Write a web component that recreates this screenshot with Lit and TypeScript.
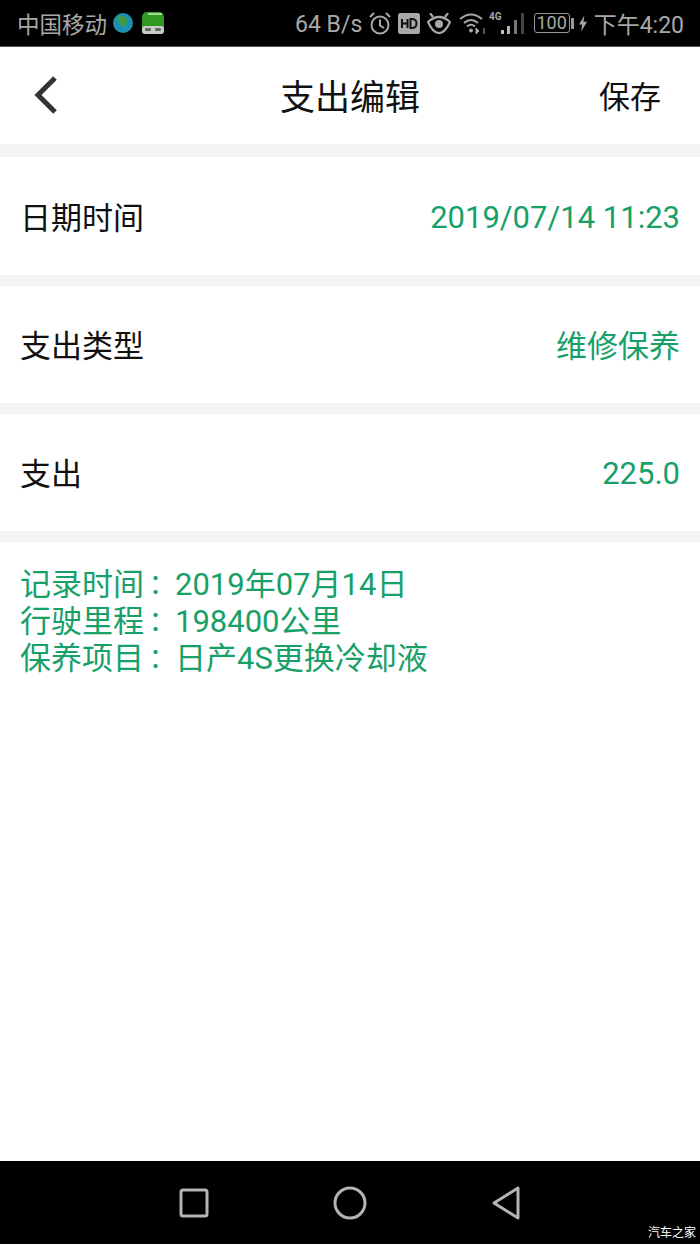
import { LitElement, html, css } from "lit";
import { customElement } from "lit/decorators.js";

@customElement("app-root")
export class AppRoot extends LitElement {
  static styles = css`
    :host {
      display: flex;
      flex-direction: column;
      width: 700px;
      height: 1244px;
      overflow: hidden;
      background: #fff;
      font-family: Roboto, "Noto Sans CJK SC", sans-serif;
      color: #111;
    }
    svg { display: block; flex: none; }
    .status {
      height: 46px;
      background: #000;
      display: flex;
      align-items: center;
      color: #a8a8a8;
      padding: 0 16px 0 17px;
      font-size: 23px;
      flex: none;
      border-bottom: 1px solid #555;
    }
    .carrier { width: 96px; white-space: nowrap; font-size: 22.5px; }
    .apps { display: flex; align-items: center; gap: 9px; }
    .speed { margin-left: 131px; padding-top: 3px; white-space: nowrap; }
    .sys { margin-left: auto; display: flex; align-items: center; }
    .alarm { margin-right: 7px; }
    .hd { margin-right: 7px; }
    .eye { margin-right: 8px; }
    .wifi { margin-right: 4px; }
    .signal { margin-right: 10px; }
    .batt { display: flex; align-items: center; margin-right: 5px; }
    .batt-body {
      width: 34px; height: 18px; border: 1px solid #999; border-radius: 3px;
      font-size: 18px; line-height: 18px; text-align: center; color: #aaa;
    }
    .nub { width: 3px; height: 11px; background: #999; margin-left: 1px; }
    .clock { margin-left: 7px; white-space: nowrap; }
    .header {
      height: 97px;
      flex: none;
      display: grid;
      grid-template-columns: 1fr auto 1fr;
      align-items: center;
      padding: 0 39px 2px;
      box-sizing: border-box;
    }
    .back { margin-left: -5px; }
    .title { font-size: 35px; }
    .save { font-size: 31px; justify-self: end; }
    .gap { background: #f4f4f4; flex: none; height: 11px; }
    .gap.first { height: 13px; }
    .row {
      height: 117px;
      flex: none;
      display: flex;
      align-items: center;
      justify-content: space-between;
      padding: 0 20px 2px;
      box-sizing: border-box;
      font-size: 31px;
    }
    .row.tall { height: 118px; }
    .val { color: #17a068; }
    .val.num { padding-top: 4px; }
    .notes {
      flex: 1;
      padding: 24px 20px 0;
      color: #17a068;
      font-size: 31px;
      line-height: 37px;
    }
    .notes div { white-space: pre; height: 37px; }
    .colon {
      display: inline-block;
      width: 31px;
      line-height: 0;
      font-family: "Noto Sans CJK TC", sans-serif;
      font-size: 27px;
      text-indent: -2px;
    }
    .nav {
      height: 83px;
      flex: none;
      background: #000;
      position: relative;
      display: flex;
      align-items: center;
      justify-content: center;
      gap: 124px;
    }
    .mark {
      position: absolute;
      right: 4px;
      bottom: 3px;
      color: #fff;
      font-size: 12px;
      line-height: 16px;
    }
  `;

  render() {
    return html`
      <div class="status">
        <span class="carrier">中国移动</span>
        <div class="apps">
          <svg width="20" height="20" viewBox="0 0 20 20">
            <circle cx="10" cy="10" r="10" fill="#1f8fb0" />
            <path d="M4 4 Q9 1 13 4 L15 10 Q11 15 8 12 Q4 10 4 4Z" fill="#3f9b4c" />
          </svg>
          <svg width="22" height="22" viewBox="0 0 22 22">
            <rect width="22" height="22" rx="5" fill="#2f9a1f" />
            <rect x="6" y="1" width="14" height="2" fill="#a6d89a" />
            <rect y="14" width="22" height="8" rx="3" fill="#c9cdc9" />
            <rect x="3" y="16" width="6" height="3" rx="1" fill="#666" />
            <rect x="13" y="16" width="6" height="3" rx="1" fill="#666" />
          </svg>
        </div>
        <span class="speed">64 B/s</span>
        <div class="sys">
          <svg class="alarm" width="22" height="23" viewBox="0 0 22 23" fill="none" stroke="#a8a8a8" stroke-width="2">
            <circle cx="11" cy="13" r="8.500" />
            <path d="M11 7.500v6l4 2.500M1 5l4-4M21 5l-4-4" />
          </svg>
          <svg class="hd" width="22" height="21" viewBox="0 0 22 21">
            <rect width="22" height="21" rx="2.500" fill="#a8a8a8" />
            <path d="M4 6v9M9.500 6v9M4 10.500h5.500M12.500 6v9h2q4-.5 4-4.500t-4-4.500z" stroke="#111" stroke-width="2" fill="none" />
          </svg>
          <svg class="eye" width="24" height="21" viewBox="0 0 24 21" fill="none" stroke="#a8a8a8" stroke-width="2.200">
            <path d="M1 9Q12 -1 23 9Q18 20 12 20Q6 20 1 9Z" />
            <circle cx="12" cy="11" r="4" fill="#a8a8a8" stroke="none" />
            <path d="M3 0l3 4M21 0l-3 4" />
          </svg>
          <svg class="wifi" width="26" height="22" viewBox="0 0 26 22" fill="none" stroke="#a8a8a8" stroke-width="2">
            <path d="M1 7Q12 -2 23 7M5 11Q12 5 19 11M8 14.500Q12 11 16 14.500" />
            <circle cx="12" cy="18.500" r="2" fill="#a8a8a8" stroke="none" />
            <path d="M17 16l3 3-3 3zM25 16v6" stroke-width="1" fill="#a8a8a8" />
          </svg>
          <svg class="signal" width="35" height="24" viewBox="0 0 35 24">
            <text x="0" y="9" font-size="10" font-weight="700" fill="#a8a8a8" font-family="Roboto">4G</text>
            <rect x="12" y="19" width="3" height="4" fill="#c0c0c0" />
            <rect x="18" y="15" width="3" height="8" fill="#b5b5b5" />
            <rect x="25" y="9" width="3" height="14" fill="#777" />
            <rect x="32" y="2" width="3" height="21" fill="#444" />
          </svg>
          <div class="batt"><div class="batt-body">100</div><div class="nub"></div></div>
          <svg width="8" height="17" viewBox="0 0 9 18">
            <path d="M6 0L0 10h3.500L2.500 18 9 7H5z" fill="#a8a8a8" />
          </svg>
          <span class="clock">下午4:20</span>
        </div>
      </div>

      <div class="header">
        <svg class="back" width="24" height="38" viewBox="0 0 24 38" fill="none" stroke="#333" stroke-width="5">
          <path d="M21 2L4 19L21 36" />
        </svg>
        <span class="title">支出编辑</span>
        <span class="save">保存</span>
      </div>
      <div class="gap first"></div>

      <div class="row tall"><span>日期时间</span><span class="val num">2019/07/14 11:23</span></div>
      <div class="gap"></div>
      <div class="row"><span>支出类型</span><span class="val">维修保养</span></div>
      <div class="gap"></div>
      <div class="row"><span>支出</span><span class="val num">225.0</span></div>
      <div class="gap"></div>

      <div class="notes">
        <div>记录时间<span class="colon">：</span>2019年07月14日</div>
        <div>行驶里程<span class="colon">：</span>198400公里</div>
        <div>保养项目<span class="colon">：</span>日产4S更换冷却液</div>
      </div>

      <div class="nav">
        <svg width="30" height="30" viewBox="0 0 30 30" fill="none" stroke="#b4b4b4" stroke-width="3">
          <rect x="2" y="2" width="26" height="26" rx="2" />
        </svg>
        <svg width="34" height="34" viewBox="0 0 34 34" fill="none" stroke="#b4b4b4" stroke-width="3">
          <circle cx="17" cy="17" r="15" />
        </svg>
        <svg width="30" height="34" viewBox="0 0 30 34" fill="none" stroke="#b4b4b4" stroke-width="3" stroke-linejoin="round">
          <path d="M27 2V32L3 17Z" />
        </svg>
        <span class="mark">汽车之家</span>
      </div>
    `;
  }
}
